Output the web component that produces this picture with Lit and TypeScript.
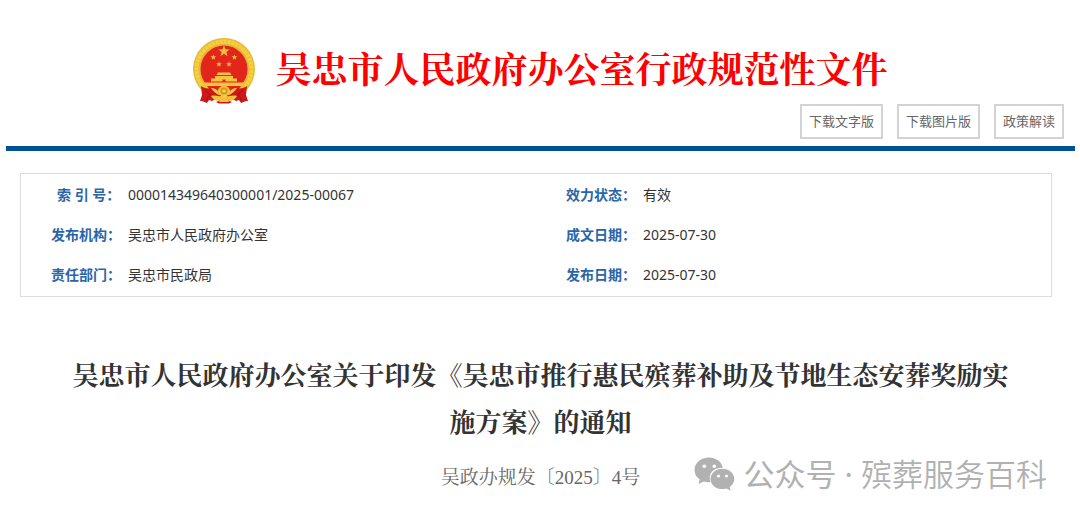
import { LitElement, html, css, svg } from "lit";
import { customElement } from "lit/decorators.js";

const star = (cx: number, cy: number, r: number) => {
  const points = Array.from({ length: 10 }, (_, i) => {
    const radius = i % 2 ? r * 0.42 : r;
    const angle = (Math.PI / 5) * i - Math.PI / 2;
    return `${(cx + radius * Math.cos(angle)).toFixed(2)},${(cy + radius * Math.sin(angle)).toFixed(2)}`;
  }).join(" ");
  return svg`<polygon points=${points} fill="#f0bd3a"></polygon>`;
};

const emblem = html`
  <svg class="emblem" viewBox="0 0 62 66" aria-hidden="true">
    <circle cx="31" cy="31" r="31" fill="#e8b931" />
    <circle cx="31" cy="31" r="27.500" fill="none" stroke="#f4d046" stroke-width="4" />
    <circle cx="31" cy="31" r="27.500" fill="none" stroke="#e3ab2b" stroke-width="3" stroke-dasharray="1 3" opacity="0.5" />
    <circle cx="31" cy="31" r="23.500" fill="#e3261c" />
    ${star(31, 13.3, 6)} ${star(20.3, 19.3, 3)} ${star(41.4, 19.3, 3)}
    ${star(26, 26.3, 3)} ${star(36, 26.3, 3)}
    <path fill="#f3c440" d="M25 34.500h12l1.500 2.500h-15zM22 38h18v4.500H22zM18 40.500h26v3H18z" />
    <path fill="#f3c440" d="M11 44.500h40l-3 4.500H14z" />
    <path fill="#e3261c" d="M29.500 41.500h3v2.500h-3z" />
    <path fill="#e3261c" d="M14 48h34l-6 8H20z" />
    <path fill="#ce1719" d="M8 48c4 3 9 3 14 1l6 9-9 5-3-1-2 3-5-2-2 0 2-6zM54 48c-4 3-9 3-14 1l-6 9 9 5 3-1 2 3 5-2 2 0-2-6z" />
    <path d="M12 52l5 4-4 7M50 52l-5 4 4 7M21 52l3 6M41 52l-3 6" fill="none" stroke="#a51214" stroke-width="1" />
    <path fill="#f1c13c" d="M18 50c4 0 5 1 7 3 0-3 3-5.500 6-5.500s6 2.500 6 5.500c2-2 3-3 7-3-2 3-5 6-8 7H26c-3-1-6-4-8-7z" />
    <circle cx="31" cy="53" r="3.500" fill="#d9921f" />
    <circle cx="31" cy="53" r="1.800" fill="#f6d257" />
    <path fill="#f1c13c" d="M18 58c5-1 9 0 13 2 4-2 8-3 13-2-2 4-6 6-13 4-7 2-11 0-13-4z" />
    <path fill="#ce1719" d="M23 64l5-2h6l5 2-3 1.500H26z" />
    <path fill="#f1c13c" d="M28 60h6l2 4H26z" />
  </svg>
`;

const chat = html`
  <svg class="chat" viewBox="0 0 42 34" aria-hidden="true">
    <path fill="#b1b1b1" d="M15 0.500C7 0.500 0.500 6 0.500 13c0 4 2 7.200 5.200 9.500L4.500 27l5.200-2.600c1.700.5 3.500.8 5.300.8h1.400C13.500 16 20 10.500 28.800 10.700 27.500 4.700 21.800 0.500 15 0.500z" />
    <path fill="#b1b1b1" d="M28.500 11.700c-6.800 0-12 4.600-12 10.200s5.200 10.200 12 10.200c1.400 0 2.800-.2 4-.6l4.200 2.300-1.100-3.900c2.800-1.900 4.700-4.800 4.700-8 0-5.600-5.300-10.200-11.800-10.200z" />
    <circle cx="10.300" cy="9.200" r="1.800" fill="#fff" />
    <circle cx="20.300" cy="9.200" r="1.800" fill="#fff" />
    <circle cx="24.500" cy="19" r="1.600" fill="#fff" />
    <circle cx="32.500" cy="19" r="1.600" fill="#fff" />
  </svg>
`;

const facts = [
  ["索 引 号：", "000014349640300001/2025-00067"],
  ["效力状态：", "有效"],
  ["发布机构：", "吴忠市人民政府办公室"],
  ["成文日期：", "2025-07-30"],
  ["责任部门：", "吴忠市民政局"],
  ["发布日期：", "2025-07-30"],
];

@customElement("app-root")
export class AppRoot extends LitElement {
  static styles = css`
    :host {
      display: block;
      position: relative;
      padding: 38px 5px 24px 6px;
      background: #fff;
      color: #333;
      font-family: "Noto Sans", "Noto Sans CJK SC", sans-serif;
    }
    h1,
    h2,
    p,
    dl,
    dd {
      margin: 0;
    }
    .banner {
      display: flex;
      justify-content: center;
      gap: 20px;
    }
    .emblem {
      width: 62px;
      height: 66px;
    }
    h1 {
      font: 700 36px/66px "Liberation Serif", "Noto Serif CJK SC", "Noto Sans CJK SC", serif;
      color: #f00;
    }
    .actions {
      display: flex;
      justify-content: flex-end;
      gap: 14px;
      padding: 0 11px 7px 0;
      border-bottom: 5px solid #005293;
    }
    button {
      height: 35px;
      padding: 0 7px 2px;
      border: 2px solid #d3d3d3;
      background: #fff;
      color: #666;
      font: 13px/20px "Noto Sans", "Noto Sans CJK SC", sans-serif;
    }
    .facts {
      display: grid;
      grid-template-columns: 1fr 1fr;
      margin: 22px 23px 0 14px;
      padding: 1px 0;
      border: 1px solid #ddd;
    }
    .fact {
      display: flex;
      font-size: 14px;
      line-height: 40px;
    }
    dt {
      width: 77px;
      margin-left: 30px;
      color: #2a65a8;
      font-weight: 700;
      white-space: pre;
    }
    .indent {
      padding-left: 6px;
      width: 71px;
    }
    h2 {
      margin: 56px 56px 0;
      font: 700 26px/47px "Liberation Serif", "Noto Serif CJK SC", "Noto Sans CJK SC", serif;
      text-align: center;
    }
    .number {
      margin-top: 16px;
      font: 19px/30px "Liberation Serif", "Noto Serif CJK SC", "Noto Sans CJK SC", serif;
      color: #666;
      text-align: center;
    }
    .watermark {
      position: absolute;
      right: 33px;
      bottom: 20px;
      display: flex;
      align-items: center;
      gap: 8px;
      color: #b1b1b1;
      font: 350 31px/46px "Noto Sans", "Noto Sans CJK SC", sans-serif;
    }
    .watermark b {
      font-weight: 400;
    }
    .chat {
      width: 42px;
      height: 34px;
    }
  `;

  render() {
    return html`
      <header>
        <div class="banner">
          ${emblem}
          <h1>吴忠市人民政府办公室行政规范性文件</h1>
        </div>
        <div class="actions">
          <button type="button">下载文字版</button>
          <button type="button">下载图片版</button>
          <button type="button">政策解读</button>
        </div>
      </header>
      <dl class="facts">
        ${facts.map(
          ([label, value], i) => html`
            <div class="fact">
              <dt class=${i === 0 ? "indent" : ""}>${label}</dt>
              <dd>${value}</dd>
            </div>
          `
        )}
      </dl>
      <main>
        <h2>吴忠市人民政府办公室关于印发《吴忠市推行惠民殡葬补助及节地生态安葬奖励实施方案》的通知</h2>
        <p class="number">吴政办规发〔2025〕4号</p>
      </main>
      <div class="watermark">${chat}<span><b>公众号 ·</b> 殡葬服务百科</span></div>
    `;
  }
}
